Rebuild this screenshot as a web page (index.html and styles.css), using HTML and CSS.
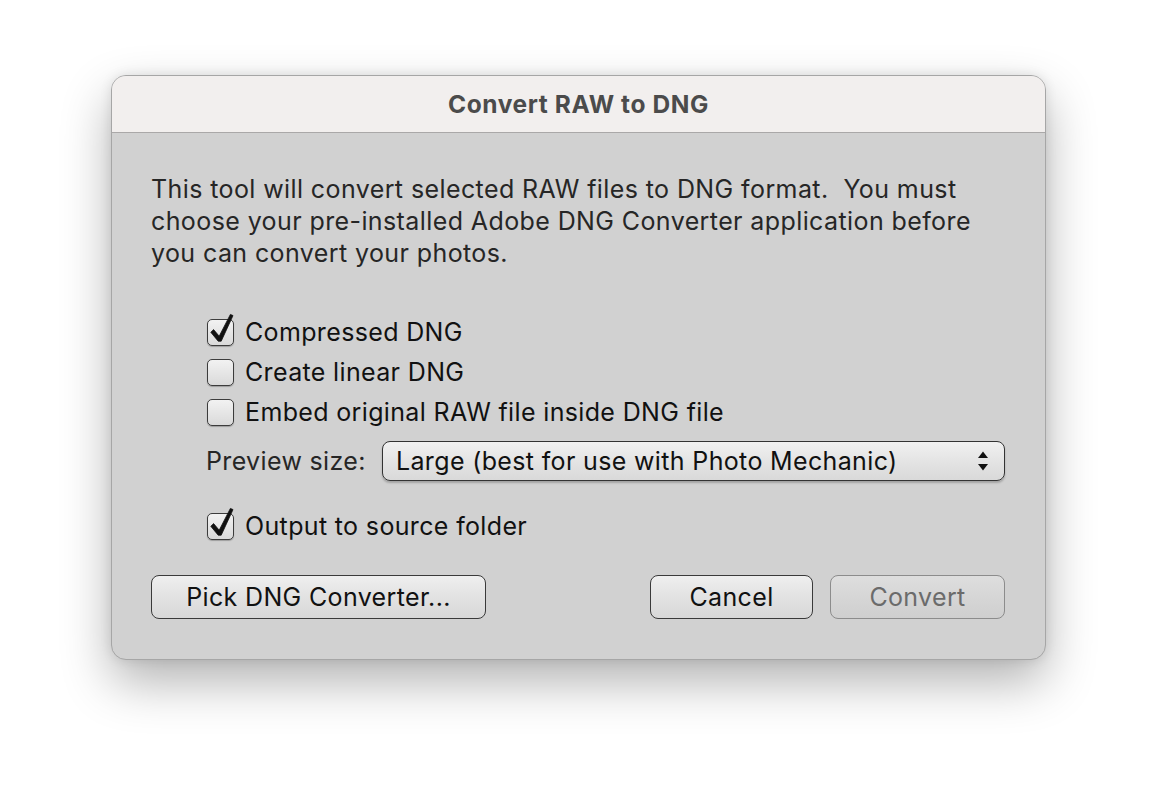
FILE: index.html
```html
<!DOCTYPE html>
<html>
<head>
<meta charset="utf-8">
<link rel="stylesheet" href="styles.css">
</head>
<body>
<div class="window">
  <div class="titlebar">Convert RAW to DNG</div>
  <div class="content">
    <p class="desc">This tool will convert selected RAW files to DNG format.&nbsp; You must choose your pre-installed Adobe DNG Converter application before you can convert your photos.</p>
    <div class="options">
      <label class="check">
        <span class="box checked"><svg viewBox="0 0 30 36" width="30" height="36"><path d="M3.8 20.3 L6.6 17.6 L12.2 24.2 L23.4 2.4 L26 3.6 L14.2 29.2 L11.2 29.2 Z" fill="#111" stroke="#111" stroke-width="0.8" stroke-linejoin="round"/></svg></span>
        <span>Compressed DNG</span>
      </label>
      <label class="check">
        <span class="box"></span>
        <span>Create linear DNG</span>
      </label>
      <label class="check">
        <span class="box"></span>
        <span>Embed original RAW file inside DNG file</span>
      </label>
      <div class="preview">
        <span class="plabel">Preview size:</span>
        <div class="popup">
          <span>Large (best for use with Photo Mechanic)</span>
          <svg class="arrows" viewBox="0 0 12 22" width="12" height="22"><path d="M6 1.5 L11 8 L1 8 Z" fill="#111"/><path d="M6 20.5 L11 14 L1 14 Z" fill="#111"/></svg>
        </div>
      </div>
      <label class="check output">
        <span class="box checked"><svg viewBox="0 0 30 36" width="30" height="36"><path d="M3.8 20.3 L6.6 17.6 L12.2 24.2 L23.4 2.4 L26 3.6 L14.2 29.2 L11.2 29.2 Z" fill="#111" stroke="#111" stroke-width="0.8" stroke-linejoin="round"/></svg></span>
        <span>Output to source folder</span>
      </label>
    </div>
    <div class="buttons">
      <button class="btn pick">Pick DNG Converter...</button>
      <div class="spacer"></div>
      <button class="btn cancel">Cancel</button>
      <button class="btn convert" disabled>Convert</button>
    </div>
  </div>
</div>
</body>
</html>
```

FILE: styles.css
```css
html, body {
  margin: 0;
  padding: 0;
  background: #ffffff;
}
body {
  width: 1158px;
  height: 808px;
  overflow: hidden;
  font-family: Inter, "Noto Sans", sans-serif;
  padding-top: 75px;
  box-sizing: border-box;
}
.window {
  width: 935px;
  height: 585px;
  margin-left: 111px;
  box-sizing: border-box;
  border: 1px solid #a6a6a6;
  border-radius: 15px;
  background: #d1d1d1;
  box-shadow: 0 22px 50px rgba(0,0,0,0.30), 0 0 12px rgba(0,0,0,0.10);
  overflow: hidden;
  display: flex;
  flex-direction: column;
}
.titlebar {
  height: 56px;
  background: #f2efee;
  border-bottom: 1px solid #aaa8a8;
  display: flex;
  align-items: center;
  justify-content: center;
  font-weight: 700;
  font-size: 24.5px;
  color: #4b4b4b;
  letter-spacing: 0.6px;
}
.content {
  padding: 40px 40px 0 39px;
  display: flex;
  flex-direction: column;
  flex: 1;
}
.desc {
  margin: 0;
  font-size: 25px;
  letter-spacing: 0.4px;
  line-height: 32px;
  color: #262626;
  width: 830px;
}
.options {
  margin-top: 43px;
  padding-left: 56px;
  display: flex;
  flex-direction: column;
}
.check {
  display: flex;
  align-items: center;
  height: 40px;
  font-size: 25px;
  letter-spacing: 0.35px;
  color: #111;
}
.box {
  width: 27px;
  height: 27px;
  box-sizing: border-box;
  border: 1.5px solid #3c3c3c;
  border-radius: 5px;
  background: linear-gradient(#f2f2f2, #dadada);
  box-shadow: 0 1px 1px rgba(0,0,0,0.25);
  margin-right: 11px;
  position: relative;
  flex: none;
}
.box svg {
  position: absolute;
  left: -1.5px;
  top: -7.5px;
}
.preview {
  display: flex;
  align-items: center;
  height: 48px;
  margin-left: -1px;
  margin-top: 5px;
}
.plabel {
  font-size: 25px;
  letter-spacing: 0.35px;
  color: #262626;
  width: 176px;
}
.popup {
  flex: 1;
  height: 40px;
  box-sizing: border-box;
  border: 1.5px solid #333;
  border-radius: 8px;
  background: linear-gradient(#f1f1f1 0%, #e4e4e4 50%, #d9d9d9 100%);
  box-shadow: 0 2px 2px rgba(0,0,0,0.22);
  display: flex;
  align-items: center;
  justify-content: space-between;
  padding: 0 15px 0 13px;
  font-size: 25px;
  letter-spacing: 0.35px;
  color: #111;
}
.arrows {
  display: block;
}
.output {
  margin-top: 21px;
}
.buttons {
  display: flex;
  align-items: center;
  margin-top: 29px;
}
.spacer { flex: 1; }
.btn {
  font-family: Inter, "Noto Sans", sans-serif;
  font-size: 25px;
  letter-spacing: 0.35px;
  height: 44px;
  box-sizing: border-box;
  border: 1.5px solid #3a3a3a;
  border-radius: 8px;
  background: linear-gradient(#efefef 0%, #e2e2e2 50%, #d8d8d8 100%);
  color: #111;
  padding: 0;
}
.pick { width: 335px; }
.cancel { width: 163px; }
.convert {
  width: 175px;
  margin-left: 17px;
  border-color: #8c8c8c;
  color: #6b6b6b;
  background: linear-gradient(#dedede 0%, #d6d6d6 50%, #cfcfcf 100%);
}
```
